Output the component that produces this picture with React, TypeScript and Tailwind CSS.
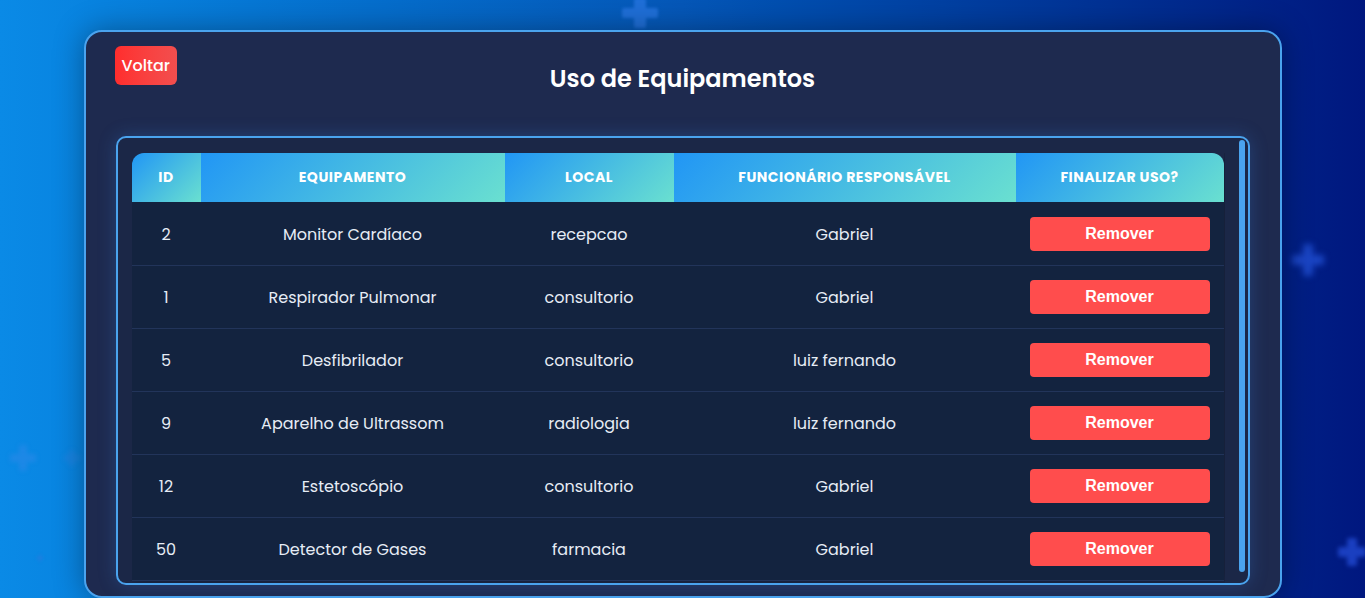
import React from 'react';

interface Uso {
  id: number;
  equipamento: string;
  local: string;
  funcionario: string;
}

const usos: Uso[] = [
  { id: 2, equipamento: 'Monitor Cardíaco', local: 'recepcao', funcionario: 'Gabriel' },
  { id: 1, equipamento: 'Respirador Pulmonar', local: 'consultorio', funcionario: 'Gabriel' },
  { id: 5, equipamento: 'Desfibrilador', local: 'consultorio', funcionario: 'luiz fernando' },
  { id: 9, equipamento: 'Aparelho de Ultrassom', local: 'radiologia', funcionario: 'luiz fernando' },
  { id: 12, equipamento: 'Estetoscópio', local: 'consultorio', funcionario: 'Gabriel' },
  { id: 50, equipamento: 'Detector de Gases', local: 'farmacia', funcionario: 'Gabriel' },
];

const headCell =
  'bg-[linear-gradient(135deg,#2196f5,#6ae0d0)] text-white text-[14px] font-bold tracking-[0.5px] uppercase text-center h-[49px]';

const bodyCell = 'text-center pt-[3px]';

// cruzinhas do fundo
const Plus: React.FC<{ className: string }> = ({ className }) => (
  <div className={`absolute ${className}`}>
    <div className="relative w-full h-full">
      <div className="absolute left-1/3 top-0 w-1/3 h-full bg-current rounded-[2px]" />
      <div className="absolute top-1/3 left-0 h-1/3 w-full bg-current rounded-[2px]" />
    </div>
  </div>
);

const App: React.FC = () => {
  return (
    <div
      className="relative min-h-screen h-[598px] overflow-hidden bg-gradient-to-r from-[#0a8ae6] via-[#0557b8] to-[#00177f] pt-[30px]"
      style={{ fontFamily: 'Poppins, Inter, "Noto Sans", sans-serif' }}
    >
      <Plus className="left-[622px] top-[-2px] w-[36px] h-[30px] text-[#1f6fd8] blur-[1.5px]" />
      <Plus className="left-[1292px] top-[244px] w-[32px] h-[32px] text-[#1a45c4] blur-[3px]" />
      <Plus className="left-[10px] top-[445px] w-[26px] h-[26px] text-[#1d88e6] blur-[2px]" />
      <Plus className="left-[64px] top-[450px] w-[16px] h-[16px] text-[#1783e0] blur-[2px]" />
      <Plus className="left-[1338px] top-[538px] w-[28px] h-[28px] text-[#1a3fc0] blur-[2px]" />
      <Plus className="left-[36px] top-[554px] w-[8px] h-[8px] text-[#1d7fe0] blur-[1.5px]" />

      <div className="relative mx-auto w-[1198px] h-[568px] rounded-[18px] border-2 border-[#4aa3ee] bg-[#1e2a4f] px-[30px] shadow-[0_0_30px_rgba(0,0,0,0.35)]">
        {/* topo */}
        <div className="grid grid-cols-[1fr_auto_1fr] items-start pt-[14px]">
          <button className="justify-self-start -ml-[1px] h-[39px] px-[7px] rounded-[6px] bg-gradient-to-r from-[#ff2d2d] to-[#f24e4e] text-white text-[16px] font-medium">
            Voltar
          </button>
          <h2 className="pt-[19px] text-center text-white text-[24px] font-semibold leading-[28px]">
            Uso de Equipamentos
          </h2>
          <div />
        </div>

        {/* tabela */}
        <div className="mt-[43px] h-[449px] flex rounded-[10px] border-2 border-[#4aa3ee] bg-[#1b2747] shadow-[0_0_18px_rgba(60,140,240,0.25)] overflow-hidden pl-[14px] pt-[15px]">
          <div className="flex-1 overflow-hidden">
            <table className="w-[1092px] border-collapse shadow-[4px_0_12px_rgba(0,0,0,0.25)]">
              <thead>
                <tr>
                  <th className={`${headCell} w-[69px] rounded-tl-[12px]`}>ID</th>
                  <th className={`${headCell} w-[304px]`}>Equipamento</th>
                  <th className={`${headCell} w-[169px]`}>Local</th>
                  <th className={`${headCell} w-[342px]`}>Funcionário Responsável</th>
                  <th className={`${headCell} w-[208px] rounded-tr-[12px]`}>Finalizar uso?</th>
                </tr>
              </thead>
              <tbody className="bg-[#13233f] text-[#e6ecf5] text-[16px]">
                {usos.map((u) => (
                  <tr key={u.id} className="h-[63px] border-b border-[#22345a]">
                    <td className={bodyCell}>{u.id}</td>
                    <td className={bodyCell}>{u.equipamento}</td>
                    <td className={bodyCell}>{u.local}</td>
                    <td className={bodyCell}>{u.funcionario}</td>
                    <td className="text-center pt-[1px]">
                      <button
                        className="w-[180px] h-[34px] rounded-[4px] bg-[#ff4d4d] text-white text-[16px] font-bold"
                        style={{ fontFamily: '"Liberation Sans", Arial, sans-serif' }}
                      >
                        Remover
                      </button>
                    </td>
                  </tr>
                ))}
              </tbody>
            </table>
          </div>
          {/* barra de rolagem */}
          <div className="w-[6px] ml-[14px] mr-[3px] mt-[-13px] mb-[11px] rounded-full bg-[#4aa3ee]" />
        </div>
      </div>
    </div>
  );
};

export default App;
